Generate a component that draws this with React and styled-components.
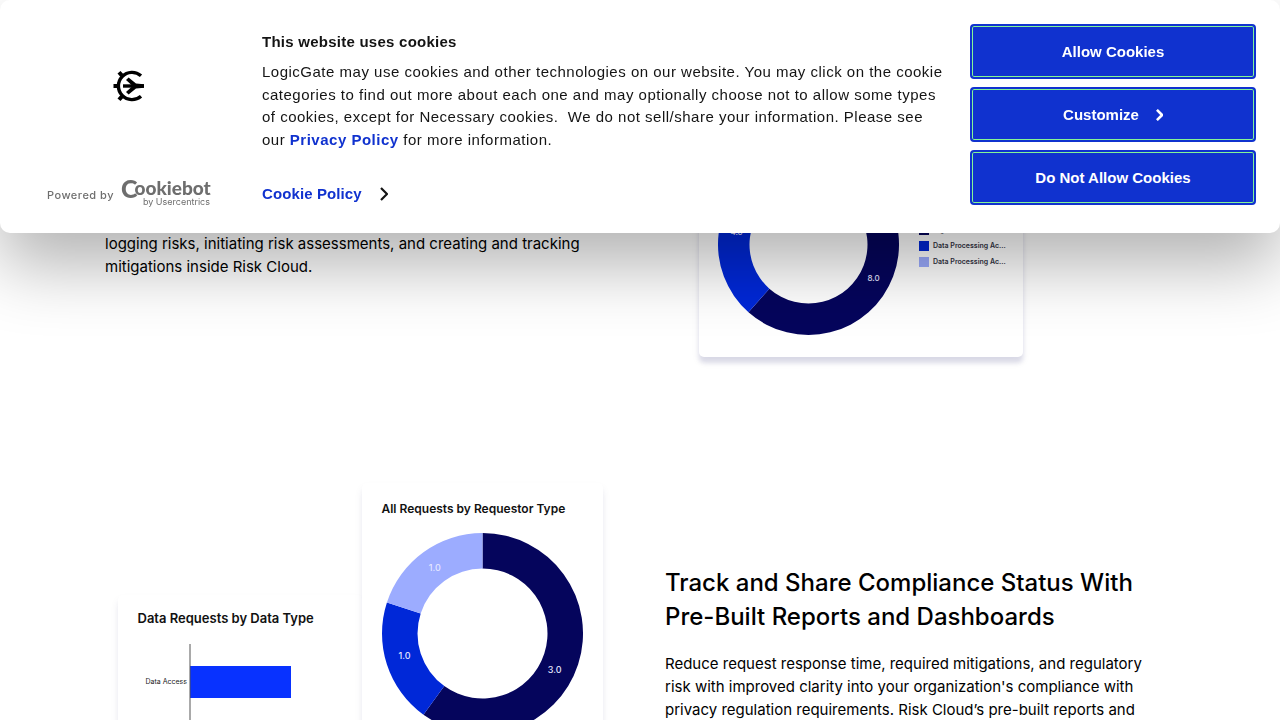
import React from "react";
import styled, { createGlobalStyle } from "styled-components";

const GlobalStyle = createGlobalStyle`
  *, *::before, *::after { box-sizing: border-box; }
  body {
    margin: 0;
    background: #fff;
    color: #000;
    font-family: Inter, sans-serif;
  }
  h2, h3, p, figure { margin: 0; }
`;

/* ---------- page content ---------- */

const Page = styled.main`
  max-width: 1118px;
  margin: 0 auto;
  padding: 153px 24px 40px;
  display: flex;
  flex-direction: column;
  gap: 126px;
`;

const FeatureRow = styled.section`
  display: grid;
  grid-template-columns: 1fr 1fr;
  gap: 50px;
  align-items: center;
`;

const Copy = styled.div`
  display: flex;
  flex-direction: column;
  gap: 18px;
  max-width: 490px;
`;

const Heading = styled.h2`
  font-size: 24px;
  line-height: 34px;
  font-weight: 500;
`;

const Paragraph = styled.p`
  font-size: 15px;
  line-height: 23px;
`;

const Card = styled.figure`
  background: #fff;
  border-radius: 5px;
  padding: ${(p) => p.$padding || "20px"};
  margin-left: ${(p) => p.$indent || "0"};
  margin-top: ${(p) => p.$drop || "0"};
  box-shadow: 0 6px 4px rgba(20, 20, 100, ${(p) => (p.$raised ? 0.1 : 0.03)}),
    0 5px 9px rgba(20, 20, 100, 0.07);
`;

const DonutCard = styled(Card)`
  display: flex;
  align-items: center;
  gap: 20px;
  width: 324px;
`;

const CardTitle = styled.figcaption`
  font-size: ${(p) => p.$size};
  line-height: 16px;
  font-weight: 600;
  color: #111;
  white-space: nowrap;
`;

const CardPair = styled.div`
  display: grid;
  grid-template-columns: 244px 241px;
  justify-content: center;
`;

const Chart = styled.svg`
  display: block;
  flex: none;
  margin-top: ${(p) => p.$gap || "0"};
`;

const Legend = styled.ul`
  list-style: none;
  margin: 0;
  padding: 2px 0 0;
  display: flex;
  flex-direction: column;
  gap: 6px;
`;

const LegendItem = styled.li`
  display: flex;
  align-items: center;
  gap: 4px;
  font-size: 7px;
  line-height: 10px;
  font-weight: 600;
  color: #334;
  white-space: nowrap;

  &::before {
    content: "";
    width: 10px;
    height: 10px;
    background: ${(p) => p.$color};
  }
`;

const NAVY = "#05055c";
const BLUE = "#0028d8";
const PERIWINKLE = "#9cacff";

const polar = (c, r, deg) => {
  const a = ((deg - 90) * Math.PI) / 180;
  return [c + r * Math.cos(a), c + r * Math.sin(a)];
};

function Donut({ size, inner, data, labelRadius, fontSize, gap, title }) {
  const c = size / 2;
  const total = data.reduce((sum, d) => sum + d.value, 0);
  let start = 0;
  const slices = data.map((d) => {
    const end = start + (d.value / total) * 360;
    const large = end - start > 180 ? 1 : 0;
    const [x1, y1] = polar(c, c, start);
    const [x2, y2] = polar(c, c, end);
    const [x3, y3] = polar(c, inner, end);
    const [x4, y4] = polar(c, inner, start);
    const [lx, ly] = polar(c, labelRadius, d.labelAngle ?? (start + end) / 2);
    start = end;
    return {
      ...d,
      lx,
      ly,
      path: `M${x1} ${y1}A${c} ${c} 0 ${large} 1 ${x2} ${y2}L${x3} ${y3}A${inner} ${inner} 0 ${large} 0 ${x4} ${y4}Z`,
    };
  });
  return (
    <Chart $gap={gap} width={size} height={size} role="img" aria-label={title}>
      {slices.map((s) => (
        <path key={s.color} d={s.path} fill={s.color} />
      ))}
      {slices.map((s) => (
        <text
          key={s.color}
          x={s.lx}
          y={s.ly + 3}
          fontSize={fontSize}
          fontFamily="Inter, sans-serif"
          fontWeight="500"
          fill="#e4e6ff"
          textAnchor="middle"
        >
          {s.value.toFixed(1)}
        </text>
      ))}
    </Chart>
  );
}

/* ---------- cookie banner ---------- */

const Banner = styled.aside`
  position: fixed;
  top: 0;
  left: 0;
  right: 0;
  display: grid;
  grid-template-columns: 214px 1fr 286px;
  gap: 24px;
  padding: 24px 24px 27px;
  background: #fff;
  border-radius: 10px;
  box-shadow: 0 32px 68px rgba(0, 0, 0, 0.3);
  color: #141414;
  font-family: "Liberation Sans", Arial, sans-serif;
  font-size: 15px;
`;

const Brand = styled.div`
  display: flex;
  flex-direction: column;
  justify-content: space-between;
  align-items: center;
  padding: 46px 4px 0 0;
`;

const PoweredBy = styled.a`
  display: flex;
  align-items: flex-end;
  gap: 7px;
  color: #6e6e6e;
  font-family: Inter, sans-serif;
  font-size: 11px;
  line-height: 22px;
  font-weight: 500;
  letter-spacing: 0.5px;
  text-decoration: none;
`;

const Wordmark = styled.svg`
  letter-spacing: 0;
  font-weight: 400;
  overflow: visible;
`;

const Notice = styled.div`
  display: flex;
  flex-direction: column;
  align-items: flex-start;
  padding: 8px 0 0;
`;

const NoticeTitle = styled.h3`
  font-size: 15px;
  line-height: 20px;
  font-weight: 700;
  letter-spacing: 0.25px;
`;

const NoticeText = styled.p`
  margin-top: 9px;
  line-height: 1.5;
  letter-spacing: 0.5px;
`;

const BannerLink = styled.a`
  color: #1032cf;
  font-weight: 700;
  text-decoration: none;
`;

const PolicyLink = styled(BannerLink)`
  display: flex;
  align-items: center;
  gap: 18px;
  margin-top: 31px;
  line-height: 24px;
  letter-spacing: 0.1px;
`;

const Actions = styled.div`
  display: flex;
  flex-direction: column;
  gap: 8px;
`;

const Button = styled.button`
  display: flex;
  align-items: center;
  justify-content: center;
  gap: 17px;
  height: 55px;
  border: 2px solid #1032cf;
  border-radius: 4px;
  background: #1032cf;
  box-shadow: inset 0 0 0 1px #84f596;
  color: #fff;
  font: 700 15px "Liberation Sans", Arial, sans-serif;
  cursor: pointer;
`;

const BrandMark = () => (
  <svg width="32" height="32" viewBox="0 0 32 32" role="img" aria-label="LogicGate">
    <g fill="none" stroke="#000" strokeWidth="3.4">
      <path d="M28 5.8A13.6 13.6 0 1 0 28 26.2" />
      <path d="M0.5 16H5M6 2.2l3 3.4M6 29.8l3-3.4" strokeWidth="4" />
      <path d="M10 16H31" />
    </g>
    <path d="M15.6 7.4L23 13.6L31 14.2V17.8L23 18.4L15.6 24.6L13 22L19.6 16L13 10Z" />
  </svg>
);

const CookiebotMark = () => (
  <Wordmark width="90" height="30" viewBox="0 0 90 30" role="img" aria-label="Cookiebot by Usercentrics">
    <text x="0" y="22" fontFamily="Lato, sans-serif" fontWeight="900" fill="#6e6e6e">
      <tspan fontSize="25">C</tspan>
      <tspan fontSize="19" dy="-3" dx="-3">ookiebot</tspan>
    </text>
    <text x="89" y="29" textAnchor="end" fontFamily="Inter, sans-serif" fontSize="9" fill="#6e6e6e">
      by Usercentrics
    </text>
  </Wordmark>
);

const Chevron = ({ size, color, weight = 2.2 }) => (
  <svg width={size / 2 + 1} height={size} viewBox="0 0 8 14" fill="none" aria-hidden="true">
    <path d="M1 1L7 7L1 13" stroke={color} strokeWidth={weight} />
  </svg>
);

function CookieBanner() {
  return (
    <Banner role="dialog" aria-label="This website uses cookies">
      <Brand>
        <BrandMark />
        <PoweredBy href="#cookiebot">
          Powered by
          <CookiebotMark />
        </PoweredBy>
      </Brand>
      <Notice>
        <NoticeTitle>This website uses cookies</NoticeTitle>
        <NoticeText>
          LogicGate may use cookies and other technologies on our website. You may click on the
          cookie categories to find out more about each one and may optionally choose not to allow
          some types of cookies, except for Necessary cookies.&nbsp; We do not sell/share your
          information. Please see our <BannerLink href="#privacy">Privacy Policy</BannerLink> for
          more information.
        </NoticeText>
        <PolicyLink href="#cookie-policy">
          Cookie Policy
          <Chevron size={14} color="#141414" />
        </PolicyLink>
      </Notice>
      <Actions>
        <Button type="button">Allow Cookies</Button>
        <Button type="button">
          Customize
          <Chevron size={12} color="#fff" weight={3} />
        </Button>
        <Button type="button">Do Not Allow Cookies</Button>
      </Actions>
    </Banner>
  );
}

export default function App() {
  return (
    <>
      <GlobalStyle />
      <Page>
        <FeatureRow>
          <Paragraph>
            logging risks, initiating risk assessments, and creating and tracking mitigations
            inside Risk Cloud.
          </Paragraph>
          <DonutCard $raised $indent="34px" $padding="1px 16px 22px 19px">
            <Donut
              title="Assessments by risk"
              size={181}
              inner={59}
              labelRadius={73}
              fontSize={8}
              data={[
                { value: 8, color: NAVY, labelAngle: 117 },
                { value: 4, color: BLUE, labelAngle: 280 },
                { value: 1, color: PERIWINKLE },
              ]}
            />
            <Legend>
              <LegendItem $color={NAVY}>High Risk Process...</LegendItem>
              <LegendItem $color={BLUE}>Data Processing Ac...</LegendItem>
              <LegendItem $color={PERIWINKLE}>Data Processing Ac...</LegendItem>
            </Legend>
          </DonutCard>
        </FeatureRow>

        <FeatureRow>
          <CardPair>
            <Card $drop="112px" $padding="15px 20px">
              <CardTitle $size="13px">Data Requests by Data Type</CardTitle>
              <Chart $gap="18px" width="204" height="110" role="img" aria-label="Data requests by data type">
                <rect x="52" y="22" width="101" height="32" fill="#0832ff" />
                <path d="M52 0V110" stroke="#555" />
                <text x="49" y="40" fontSize="7" fontFamily="Inter, sans-serif" fill="#222" textAnchor="end">
                  Data Access
                </text>
              </Chart>
            </Card>
            <Card $padding="18px 20px 69px">
              <CardTitle $size="12px">All Requests by Requestor Type</CardTitle>
              <Donut
                title="All requests by requestor type"
                size={201}
                inner={65}
                labelRadius={81}
                fontSize={9}
                gap="16px"
                data={[
                  { value: 3, color: NAVY, labelAngle: 117 },
                  { value: 1, color: BLUE, labelAngle: 254 },
                  { value: 1, color: PERIWINKLE },
                ]}
              />
            </Card>
          </CardPair>
          <Copy>
            <Heading>Track and Share Compliance Status With Pre-Built Reports and Dashboards</Heading>
            <Paragraph>
              Reduce request response time, required mitigations, and regulatory risk with
              improved clarity into your organization's compliance with privacy regulation
              requirements. Risk Cloud’s pre-built reports and
            </Paragraph>
          </Copy>
        </FeatureRow>
      </Page>
      <CookieBanner />
    </>
  );
}
